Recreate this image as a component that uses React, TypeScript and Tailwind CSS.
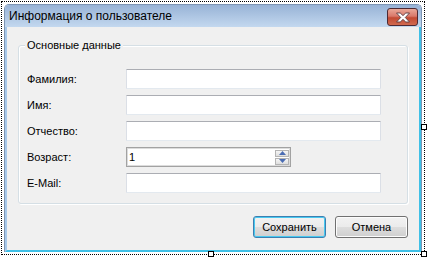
import React from "react";

const font = { fontFamily: '"Liberation Sans", Arial, sans-serif' };

function TextBox({ width = "w-[255px]" }: { width?: string }) {
  return (
    <div
      className={`${width} h-[20px] bg-white border border-t-[#abadb3] border-x-[#dbdfe6] border-b-[#e3e9ef] rounded-[1px]`}
    />
  );
}

function NumericBox() {
  return (
    <div className="w-[165px] h-[20px] bg-white border border-[#a2a2a2] shadow-[inset_0_0_0_1px_#dcdcdc] flex items-center">
      <span className="flex-1 pl-[2px] text-[11px] text-black leading-none">1</span>
      <div className="flex flex-col gap-[1px] mr-[1px]">
        <div className="w-[14px] h-[7px] border border-[#b4b4b4] bg-gradient-to-b from-[#f6f6f6] to-[#dedede] flex items-center justify-center">
          <svg width="7" height="4" viewBox="0 0 7 4">
            <path d="M0 4 L3.5 0 L7 4 Z" fill="#4a6cb3" />
          </svg>
        </div>
        <div className="w-[14px] h-[7px] border border-[#b4b4b4] bg-gradient-to-b from-[#f6f6f6] to-[#dedede] flex items-center justify-center">
          <svg width="7" height="4" viewBox="0 0 7 4">
            <path d="M0 0 L7 0 L3.5 4 Z" fill="#4a6cb3" />
          </svg>
        </div>
      </div>
    </div>
  );
}

function Row({ label, children }: { label: string; children: React.ReactNode }) {
  return (
    <div className="flex items-center h-[20px]">
      <span className="w-[99px] text-[11px] text-black leading-none">{label}</span>
      {children}
    </div>
  );
}

function Button({ text, primary }: { text: string; primary?: boolean }) {
  return (
    <button
      className={`w-[73px] h-[22px] rounded-[3px] border text-[11px] text-black leading-none bg-[linear-gradient(to_bottom,#f2f2f2_0%,#ebebeb_50%,#dddddd_51%,#cfcfcf_100%)] ${
        primary
          ? "border-[#3c7fb1] shadow-[inset_0_0_0_1px_#48c9f0]"
          : "border-[#707070] shadow-[inset_0_0_0_1px_#fcfcfc]"
      }`}
    >
      {text}
    </button>
  );
}

function Handle({ className }: { className: string }) {
  return <div className={`absolute w-[6px] h-[6px] bg-white border border-black ${className}`} />;
}

export default function App() {
  return (
    <div className="relative w-[428px] h-[258px] bg-white pl-[4px] pt-[4px]" style={font}>
      <div className="w-[418px] h-[248px] flex flex-col rounded-t-[5px] overflow-hidden border border-[#7e95b3] border-b-0">
        <div className="h-[22px] flex items-center justify-between bg-gradient-to-b from-[#98b3d6] to-[#c3d8ef] pl-[4px] pr-[3px]">
          <span className="text-[12px] text-black leading-none">Информация о пользователе</span>
          <div className="w-[31px] h-[18px] mt-[2px] rounded-[3px] border border-[#4d2a34] bg-[linear-gradient(to_bottom,#eaa898_0%,#d9786a_45%,#c24a33_55%,#d16a4f_100%)] flex items-center justify-center">
            <svg width="16" height="11" viewBox="0 0 16 11">
              <path
                d="M1.5 1 L5.2 1 L8 3.6 L10.8 1 L14.5 1 L10.3 5.5 L14.5 10 L10.8 10 L8 7.4 L5.2 10 L1.5 10 L5.7 5.5 Z"
                fill="#ffffff"
                stroke="#5a3a40"
                strokeWidth="0.9"
              />
            </svg>
          </div>
        </div>
        <div className="flex-1 flex border-l-[2px] border-l-[#a8c9ea] border-r-[2px] border-r-[#3fc0e6] border-b-[2px] border-b-[#3fc0e6] bg-[#f0f0f0]">
          <div className="flex-1 flex flex-col pl-[11px] pt-[18px]">
            <div className="relative w-[390px] h-[159px] rounded-[3px] border border-[#d5dfe5] shadow-[inset_1px_1px_0_#ffffff,1px_1px_0_#ffffff] pl-[8px] pt-[23px]">
              <span className="absolute left-[6px] -top-[7px] px-[2px] bg-[#f0f0f0] text-[11px] text-black leading-[13px]">
                Основные данные
              </span>
              <div className="flex flex-col gap-[6px]">
                <Row label="Фамилия:">
                  <TextBox />
                </Row>
                <Row label="Имя:">
                  <TextBox />
                </Row>
                <Row label="Отчество:">
                  <TextBox />
                </Row>
                <Row label="Возраст:">
                  <NumericBox />
                </Row>
                <Row label="E-Mail:">
                  <TextBox />
                </Row>
              </div>
            </div>
            <div className="w-[390px] flex justify-end gap-[9px] mt-[12px]">
              <Button text="Сохранить" primary />
              <Button text="Отмена" />
            </div>
          </div>
        </div>
      </div>
      <div className="absolute left-[1px] top-[1px] w-[424px] h-[254px] border border-dotted border-black pointer-events-none" />
      <Handle className="left-[421px] top-[124px]" />
      <Handle className="left-[208px] top-[251px]" />
      <Handle className="left-[421px] top-[251px]" />
    </div>
  );
}
